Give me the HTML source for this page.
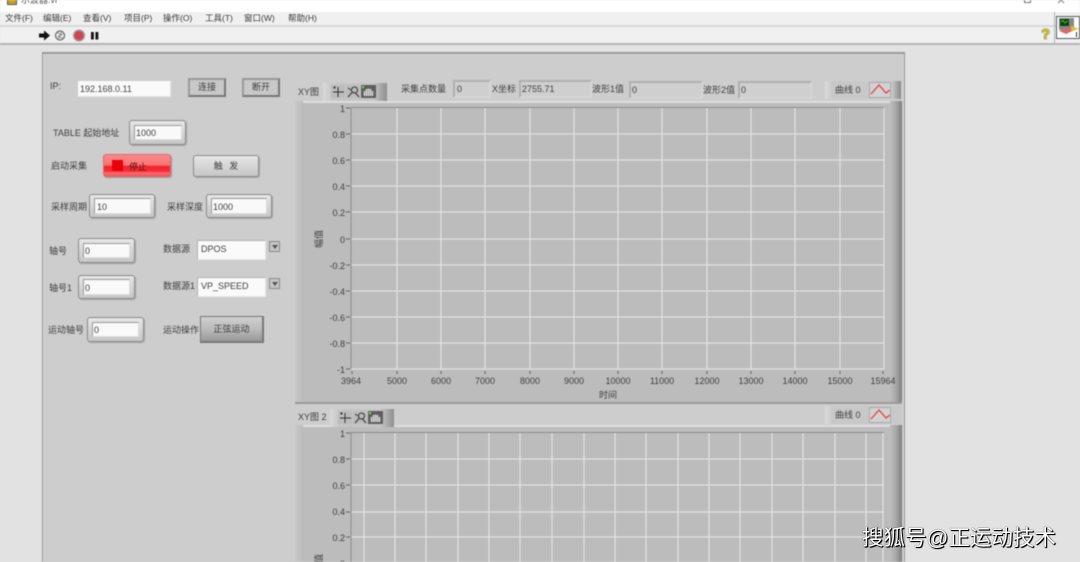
<!DOCTYPE html>
<html lang="zh"><head><meta charset="utf-8"><title>示波器.vi</title>
<style>
html,body{margin:0;padding:0;width:1080px;height:562px;overflow:hidden;background:#e2e2e2}
#app{position:absolute;left:0;top:0;width:1080px;height:562px;overflow:hidden;filter:blur(.45px);font-family:"Liberation Sans","Noto Sans CJK SC",sans-serif;font-size:9px;color:#3e3e3e}
#app div{position:absolute;box-sizing:border-box}
.t{white-space:nowrap;line-height:10px;height:10px}
.m{font-size:8.5px;top:13px;color:#3a3a3a}
.o{background:linear-gradient(#e6e6e6,#c6c6c6);border:1px solid #8a8a8a;border-radius:3px;box-shadow:1px 1px 1px #a4a4a4}
.i{background:#f9f9f9;border:1px solid #999;border-right-color:#ddd;border-bottom-color:#ddd}
.f{background:#fafafa;border:1px solid #b0b0b0;border-right-color:#e8e8e8;border-bottom-color:#e8e8e8}
.b{background:#c8c8c8;border:2px solid #777;border-top-color:#999;border-left-color:#999;text-align:center;line-height:15px}
.ro{background:#cfcfcf;border:2px solid #b0b0b0;border-right-color:#d6d6d6;border-bottom-color:#d6d6d6}
.dd{background:#c4c4c4;border:1px solid #8a8a8a;width:11px;height:11px}
.dd:after{content:"";position:absolute;left:2px;top:3px;border:3px solid transparent;border-top:4px solid #555}
.yl{width:30px;text-align:right;margin-top:1px}
.xl{width:40px;text-align:center}
</style></head><body><div id="app">

<!-- title bar -->
<div style="left:0;top:0;width:1080px;height:12px;background:#fff"></div>
<div style="left:7px;top:0;width:10px;height:5px;background:#c9a51e;border:1px solid #555;border-top:0"></div>
<div class="t" style="left:21px;top:-5px;font-size:9px;color:#555">示波器.vi</div>
<div style="left:1024px;top:-4px;width:7px;height:7px;border:1px solid #777"></div>
<svg style="position:absolute;left:1058px;top:0" width="8" height="4"><path d="M0 -3L6 3M6 -3L0 3" stroke="#777" fill="none"/></svg>

<!-- menu + toolbar -->
<div style="left:0;top:12px;width:1080px;height:14px;background:#f0f0f0"></div>
<div style="left:0;top:25px;width:1080px;height:2px;background:#d8d8d8"></div>
<div style="left:0;top:27px;width:1080px;height:17px;background:#f0f0f0"></div>
<div style="left:0;top:43px;width:1080px;height:2px;background:#b4b4b4"></div>
<div style="left:1054px;top:12px;width:1px;height:32px;background:#b4b4b4"></div>
<div class="t m" style="left:5px">文件(F)</div>
<div class="t m" style="left:43px">编辑(E)</div>
<div class="t m" style="left:83px">查看(V)</div>
<div class="t m" style="left:124px">项目(P)</div>
<div class="t m" style="left:163px">操作(O)</div>
<div class="t m" style="left:205px">工具(T)</div>
<div class="t m" style="left:244px">窗口(W)</div>
<div class="t m" style="left:288px">帮助(H)</div>

<svg style="position:absolute;left:38px;top:29px" width="66" height="13">
 <path d="M1 4.500H6V1.500L12 6.500L6 11.500V8.500H1Z" fill="#111"/>
 <circle cx="22" cy="6.500" r="4.500" fill="none" stroke="#666" stroke-width="1.200"/>
 <path d="M18.500 3.500L24 5.500L20 7.500L25.500 9.500M20 10.500L24 2.500" fill="none" stroke="#777" stroke-width=".8"/>
 <circle cx="41" cy="6.500" r="5.300" fill="#d4434c" stroke="#999" stroke-width="1.500"/>
 <rect x="53" y="3" width="2.800" height="7.500" fill="#111"/><rect x="57.500" y="3" width="2.800" height="7.500" fill="#111"/>
</svg>
<div class="t" style="left:1041px;top:28px;height:14px;font:bold 15px/14px 'Liberation Sans',sans-serif;color:#dccb00;text-shadow:0 0 1px #333,0 0 1px #333">?</div>
<div style="left:1056px;top:16px;width:24px;height:23px;background:#fff;border:1px solid #555"></div>
<svg style="position:absolute;left:1057px;top:17px" width="23" height="21">
 <rect x="2" y="1" width="15" height="12" fill="#888"/>
 <rect x="3" y="2" width="9" height="7" fill="#123f12"/>
 <path d="M4 5L6 3.500L8 6L11 4" stroke="#3c3" fill="none"/>
 <path d="M2 14L14 10L20 12L9 17Z" fill="#d96a6a"/>
 <path d="M14 9L22 12L14 14Z" fill="#d8c52a"/>
 <rect x="19" y="15" width="1" height="5" fill="#333"/>
</svg>

<!-- panel -->
<div style="left:42px;top:52px;width:863px;height:520px;background:#cdcdcd;border:1px solid #9a9a9a;border-top-width:2px;box-shadow:inset 0 0 0 1px #d4d4d4"></div>

<!-- left controls -->
<div class="t" style="left:50px;top:81px">IP:</div>
<div class="i" style="left:77px;top:80px;width:94px;height:17px;border-color:#ccc #e4e4e4 #e4e4e4 #ccc"></div>
<div class="t" style="left:80px;top:84px;color:#444">192.168.0.11</div>
<div class="b" style="left:188px;top:78px;width:38px;height:19px">连接</div>
<div class="b" style="left:242px;top:78px;width:38px;height:19px">断开</div>

<div class="t" style="left:53px;top:128px">TABLE 起始地址</div>
<div class="o" style="left:129px;top:120px;width:57px;height:25px"></div>
<div class="i" style="left:134px;top:125px;width:48px;height:15px"></div>
<div class="t" style="left:136px;top:128px">1000</div>

<div class="t" style="left:51px;top:161px">启动采集</div>
<div style="left:103px;top:154px;width:68px;height:23px;border-radius:3px;border:1px solid #e06a6a;background:linear-gradient(#f98a8a 0,#fb7474 48%,#f4222c 54%,#f62c36 76%,#f96a70 86%,#f2545c 100%);box-shadow:1px 1px 1px #999"></div>
<div style="left:112px;top:160px;width:11px;height:11px;background:#e8000a"></div>
<div class="t" style="left:129px;top:162px;color:#4a1818">停止</div>
<div class="o" style="left:193px;top:155px;width:66px;height:22px;text-align:center;line-height:20px;word-spacing:4px">触 发</div>

<div class="t" style="left:51px;top:202px">采样周期</div>
<div class="o" style="left:89px;top:194px;width:66px;height:24px"></div>
<div class="i" style="left:94px;top:198px;width:57px;height:16px"></div>
<div class="t" style="left:97px;top:202px">10</div>
<div class="t" style="left:167px;top:202px">采样深度</div>
<div class="o" style="left:206px;top:194px;width:66px;height:24px"></div>
<div class="i" style="left:211px;top:198px;width:56px;height:16px"></div>
<div class="t" style="left:213px;top:202px">1000</div>

<div class="t" style="left:49px;top:246px">轴号</div>
<div class="o" style="left:78px;top:238px;width:57px;height:25px"></div>
<div class="i" style="left:83px;top:243px;width:47px;height:15px"></div>
<div class="t" style="left:85px;top:246px">0</div>
<div class="t" style="left:163px;top:244px">数据源</div>
<div class="f" style="left:197px;top:240px;width:69px;height:20px"></div>
<div class="t" style="left:201px;top:244px">DPOS</div>
<div class="dd" style="left:269px;top:241px"></div>

<div class="t" style="left:49px;top:283px">轴号1</div>
<div class="o" style="left:78px;top:275px;width:57px;height:24px"></div>
<div class="i" style="left:83px;top:279px;width:47px;height:16px"></div>
<div class="t" style="left:85px;top:283px">0</div>
<div class="t" style="left:163px;top:281px">数据源1</div>
<div class="f" style="left:197px;top:277px;width:69px;height:20px"></div>
<div class="t" style="left:201px;top:281px">VP_SPEED</div>
<div class="dd" style="left:269px;top:278px"></div>

<div class="t" style="left:48px;top:325px">运动轴号</div>
<div class="o" style="left:87px;top:317px;width:57px;height:25px"></div>
<div class="i" style="left:92px;top:322px;width:47px;height:15px"></div>
<div class="t" style="left:94px;top:325px">0</div>
<div class="t" style="left:163px;top:325px">运动操作</div>
<div style="left:200px;top:316px;width:64px;height:27px;background:linear-gradient(#d0d0d0,#bbb 50%,#999);border:1px solid #777;border-right:2px solid #777;border-bottom:2px solid #777;text-align:center;line-height:24px">正弦运动</div>

<!-- top plot header -->
<div class="t" style="left:298px;top:87px">XY图</div>
<div style="left:323px;top:83px;width:64px;height:18px;background:linear-gradient(90deg,#dadada 0,#c6c6c6 15%,#c4c4c4 80%,#8e8e8e 100%)"></div>
<svg style="position:absolute;left:331px;top:84px" width="46" height="15">
 <rect x="0" y="1" width="14" height="13" fill="#bcbcbc"/><rect x="15" y="1" width="14" height="13" fill="#bcbcbc"/>
 <path d="M3 3h1v1h-1zM7 3V13M2 8H13" stroke="#333" fill="none"/>
 <circle cx="23.500" cy="6" r="3" fill="none" stroke="#333"/><path d="M21 8.500L17 13M24.500 9L28 13M17 4L20 6" stroke="#333" fill="none"/>
 <rect x="30" y="1" width="15" height="13" fill="#5e5e5e"/><path d="M33.500 12V7M35.500 12V5M37.500 12V4.500M39.500 12V5M41.500 12V7" stroke="#ddd" stroke-width="1.500"/><circle cx="32" cy="3" r="1.300" fill="#6c6"/>
</svg>
<div class="t" style="left:401px;top:84px">采集点数量</div>
<div class="ro" style="left:453px;top:80px;width:38px;height:18px"></div>
<div class="t" style="left:457px;top:84px">0</div>
<div class="t" style="left:492px;top:84px">X坐标</div>
<div class="ro" style="left:519px;top:80px;width:73px;height:18px"></div>
<div class="t" style="left:522px;top:84px">2755.71</div>
<div class="t" style="left:592px;top:84px">波形1值</div>
<div class="ro" style="left:629px;top:81px;width:74px;height:18px"></div>
<div class="t" style="left:632px;top:85px">0</div>
<div class="t" style="left:703px;top:85px">波形2值</div>
<div class="ro" style="left:738px;top:81px;width:74px;height:18px"></div>
<div class="t" style="left:741px;top:85px">0</div>
<div style="left:825px;top:81px;width:76px;height:18px;background:linear-gradient(90deg,#dcdcdc,#c8c8c8 10%,#c8c8c8 88%,#888)"></div>
<div class="t" style="left:835px;top:85px">曲线 0</div>
<div style="left:869px;top:82px;width:22px;height:16px;background:#d2d2d2;border:1px solid #aaa"></div>
<svg style="position:absolute;left:870px;top:83px" width="20" height="14"><path d="M1 11L9 2L16 10L20 7" fill="none" stroke="#e84040" stroke-width="1.300"/></svg>

<!-- plot 1 frame -->
<div style="left:295px;top:101px;width:607px;height:303px;background:#bcbcbc"></div>
<div style="left:295px;top:101px;width:607px;height:2px;background:#dedede"></div>
<div style="left:295px;top:101px;width:8px;height:303px;background:linear-gradient(90deg,#c8c8c8,#bcbcbc)"></div>
<div style="left:890px;top:101px;width:12px;height:303px;background:linear-gradient(90deg,#bcbcbc,#a8a8a8 50%,#7c7c7c)"></div>
<div style="left:295px;top:402px;width:607px;height:2px;background:#9a9a9a"></div>

<!-- plot 2 frame -->
<div style="left:295px;top:425px;width:607px;height:137px;background:#bcbcbc"></div>
<div style="left:295px;top:425px;width:607px;height:2px;background:#dedede"></div>
<div style="left:295px;top:425px;width:8px;height:137px;background:linear-gradient(90deg,#c8c8c8,#bcbcbc)"></div>
<div style="left:890px;top:425px;width:12px;height:137px;background:linear-gradient(90deg,#bcbcbc,#a8a8a8 50%,#7c7c7c)"></div>

<!-- grids -->
<svg style="position:absolute;left:0;top:0" width="1080" height="562" shape-rendering="crispEdges">
 <g stroke="#e8e8e8" stroke-width="1" fill="none">
  <path d="M397 108V369M441 108V369M485 108V369M530 108V369M574 108V369M618 108V369M662 108V369M707 108V369M751 108V369M795 108V369M840 108V369M884 108V369"/>
  <path d="M351 134H884M351 160H884M351 186H884M351 212H884M351 239H884M351 265H884M351 291H884M351 317H884M351 343H884M351 369H884"/>
  <path d="M364 433V562M395 433V562M426 433V562M458 433V562M489 433V562M520 433V562M552 433V562M584 433V562M615 433V562M646 433V562M678 433V562M709 433V562M740 433V562M772 433V562M803 433V562M835 433V562M866 433V562M883 433V562"/>
  <path d="M351 459H884M351 485H884M351 512H884M351 537H884"/>
 </g>
 <path d="M351 107.500H884M351 107V369M351 432.500H884M351 432V562" stroke="#8c8c8c" stroke-width="1" fill="none"/>
 <path d="M346 108h4M346 134h4M346 160h4M346 186h4M346 212h4M346 239h4M346 265h4M346 291h4M346 317h4M346 343h4M346 369h4M346 433h4M346 459h4M346 485h4M346 512h4M346 537h4" stroke="#666"/>
 <path d="M352 371v3M397 371v3M441 371v3M485 371v3M530 371v3M574 371v3M618 371v3M662 371v3M707 371v3M751 371v3M795 371v3M840 371v3M883 371v3" stroke="#666"/>
</svg>

<div class="t yl" style="left:315px;top:103px">1</div>
<div class="t yl" style="left:315px;top:129px">0.8</div>
<div class="t yl" style="left:315px;top:155px">0.6</div>
<div class="t yl" style="left:315px;top:181px">0.4</div>
<div class="t yl" style="left:315px;top:207px">0.2</div>
<div class="t yl" style="left:315px;top:234px">0</div>
<div class="t yl" style="left:315px;top:260px">-0.2</div>
<div class="t yl" style="left:315px;top:286px">-0.4</div>
<div class="t yl" style="left:315px;top:312px">-0.6</div>
<div class="t yl" style="left:315px;top:338px">-0.8</div>
<div class="t yl" style="left:315px;top:364px">-1</div>

<div class="t xl" style="left:331px;top:376px">3964</div>
<div class="t xl" style="left:377px;top:376px">5000</div>
<div class="t xl" style="left:421px;top:376px">6000</div>
<div class="t xl" style="left:465px;top:376px">7000</div>
<div class="t xl" style="left:510px;top:376px">8000</div>
<div class="t xl" style="left:554px;top:376px">9000</div>
<div class="t xl" style="left:598px;top:376px">10000</div>
<div class="t xl" style="left:642px;top:376px">11000</div>
<div class="t xl" style="left:687px;top:376px">12000</div>
<div class="t xl" style="left:731px;top:376px">13000</div>
<div class="t xl" style="left:775px;top:376px">14000</div>
<div class="t xl" style="left:820px;top:376px">15000</div>
<div class="t xl" style="left:863px;top:376px">15964</div>
<div class="t" style="left:599px;top:390px">时间</div>
<div class="t" style="left:310px;top:234px;width:18px;text-align:center;transform:rotate(-90deg)">幅值</div>

<!-- plot 2 header -->
<div class="t" style="left:298px;top:412px">XY图 2</div>
<div style="left:330px;top:409px;width:64px;height:18px;background:linear-gradient(90deg,#dadada 0,#c6c6c6 15%,#c4c4c4 80%,#8e8e8e 100%)"></div>
<svg style="position:absolute;left:338px;top:410px" width="46" height="15">
 <rect x="0" y="1" width="14" height="13" fill="#bcbcbc"/><rect x="15" y="1" width="14" height="13" fill="#bcbcbc"/>
 <path d="M3 3h1v1h-1zM7 3V13M2 8H13" stroke="#333" fill="none"/>
 <circle cx="23.500" cy="6" r="3" fill="none" stroke="#333"/><path d="M21 8.500L17 13M24.500 9L28 13M17 4L20 6" stroke="#333" fill="none"/>
 <rect x="30" y="1" width="15" height="13" fill="#5e5e5e"/><path d="M33.500 12V7M35.500 12V5M37.500 12V4.500M39.500 12V5M41.500 12V7" stroke="#ddd" stroke-width="1.500"/><circle cx="32" cy="3" r="1.300" fill="#6c6"/>
</svg>
<div style="left:825px;top:406px;width:76px;height:18px;background:linear-gradient(90deg,#dcdcdc,#c8c8c8 10%,#c8c8c8 100%)"></div>
<div class="t" style="left:835px;top:410px">曲线 0</div>
<div style="left:869px;top:407px;width:22px;height:16px;background:#d2d2d2;border:1px solid #aaa"></div>
<svg style="position:absolute;left:870px;top:408px" width="20" height="14"><path d="M1 11L9 2L16 10L20 7" fill="none" stroke="#e84040" stroke-width="1.300"/></svg>

<div class="t yl" style="left:315px;top:428px">1</div>
<div class="t yl" style="left:315px;top:454px">0.8</div>
<div class="t yl" style="left:315px;top:480px">0.6</div>
<div class="t yl" style="left:315px;top:506px">0.4</div>
<div class="t yl" style="left:315px;top:532px">0.2</div>
<div class="t yl" style="left:315px;top:558px">0</div>
<div class="t" style="left:310px;top:558px;width:18px;text-align:center;transform:rotate(-90deg)">幅值</div>
</div>

<!-- watermark -->
<div style="position:absolute;left:862px;top:525px;white-space:nowrap;font:21.500px/26px 'Liberation Sans','Noto Sans CJK SC',sans-serif;color:#fff;text-shadow:1px 1px 1px #000,1px 1px 0 #000,0 0 1px #000">搜狐号@正运动技术</div>
</body></html>
